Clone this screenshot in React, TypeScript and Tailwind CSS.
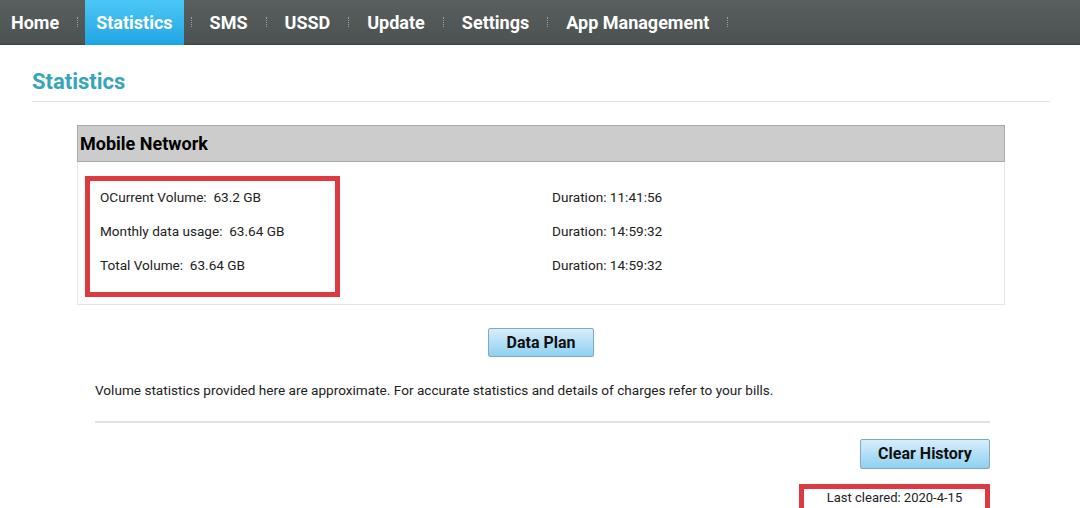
import React from 'react';

const navItems = ['Home', 'Statistics', 'SMS', 'USSD', 'Update', 'Settings', 'App Management'];

const usageRows = [
  { label: 'OCurrent Volume:', value: '63.2 GB', duration: '11:41:56' },
  { label: 'Monthly data usage:', value: '63.64 GB', duration: '14:59:32' },
  { label: 'Total Volume:', value: '63.64 GB', duration: '14:59:32' },
];

const Separator: React.FC = () => (
  <span className="mx-[7px] h-[10px] w-px border-l border-dotted border-[#9aa0a0]" />
);

const App: React.FC = () => {
  const active = 'Statistics';

  return (
    <div className="min-h-[508px] w-[1080px] bg-white font-['Roboto',sans-serif] text-[#222]">
      {/* Top navigation */}
      <nav className="flex h-[45px] items-center bg-gradient-to-b from-[#595f5e] to-[#4c5251] border-b border-[#3f4443]">
        {navItems.map((item) => (
          <React.Fragment key={item}>
            <a
              className={
                item === active
                  ? 'flex h-[45px] items-center bg-gradient-to-b from-[#4cc8f6] to-[#1ea4e4] px-[11px] pt-[1px] text-[18px] font-bold text-white'
                  : 'flex h-[45px] items-center px-[11px] pt-[1px] text-[18px] font-bold text-white'
              }
            >
              {item}
            </a>
            <Separator />
          </React.Fragment>
        ))}
      </nav>

      <div className="px-[32px] pr-[30px]">
        <h1 className="pt-[22px] pb-[4px] text-[22px] font-bold leading-[30px] text-[#35a6b8]">Statistics</h1>
        <div className="h-px bg-[#e2e2e2]" />

        <div className="px-[45px] pt-[23px]">
          {/* Mobile network panel */}
          <div className="border border-[#e4e4e4]">
            <div className="flex h-[37px] items-center border border-[#a9a9a9] bg-[#cccccc] -m-px pl-[2px] text-[18px] font-bold text-black">
              Mobile Network
            </div>
            <div className="flex pb-[7px] pt-[15px]">
              <div className="w-1/2 pl-[7px]">
                <div className="w-[255px] border-[5px] border-[#dc3a40] pb-[12px] pl-[10px] pt-[1px]">
                  {usageRows.map((row, i) => (
                    <div key={i} className={`flex h-[30px] items-center text-[13.6px] ${i > 0 ? 'mt-[4px]' : ''}`}>
                      {row.label}&nbsp;&nbsp;{row.value}
                    </div>
                  ))}
                </div>
              </div>
              <div className="w-1/2 pl-[11px] pt-[6px]">
                {usageRows.map((row, i) => (
                  <div key={i} className={`flex h-[30px] items-center text-[13.6px] ${i > 0 ? 'mt-[4px]' : ''}`}>
                    Duration: {row.duration}
                  </div>
                ))}
              </div>
            </div>
          </div>

          <div className="flex justify-center pt-[23px]">
            <button className="h-[29px] w-[106px] rounded-[2px] border border-[#7fa9c4] bg-gradient-to-b from-[#d6eefb] to-[#8fd0f1] text-[16px] font-bold text-[#111]">
              Data Plan
            </button>
          </div>

          <div className="pl-[18px] pr-[15px]">
            <p className="pt-[24px] text-[13.6px] leading-[18px]">
              Volume statistics provided here are approximate. For accurate statistics and details of charges refer to your bills.
            </p>
            <div className="mt-[22px] h-[2px] bg-[#e3e3e3]" />

            <div className="flex justify-end pt-[16px]">
              <button className="h-[30px] w-[130px] rounded-[2px] border border-[#7fa9c4] bg-gradient-to-b from-[#d6eefb] to-[#8fd0f1] text-[16px] font-bold text-[#111]">
                Clear History
              </button>
            </div>

            <div className="flex justify-end pt-[15px]">
              <div className="w-[191px] border-[5px] border-[#dc3a40] bg-white px-[4px]">
                <div className="h-[20px] text-center text-[13px] leading-[18px]">Last cleared: 2020-4-15</div>
              </div>
            </div>
          </div>
        </div>
      </div>
    </div>
  );
};

export default App;
